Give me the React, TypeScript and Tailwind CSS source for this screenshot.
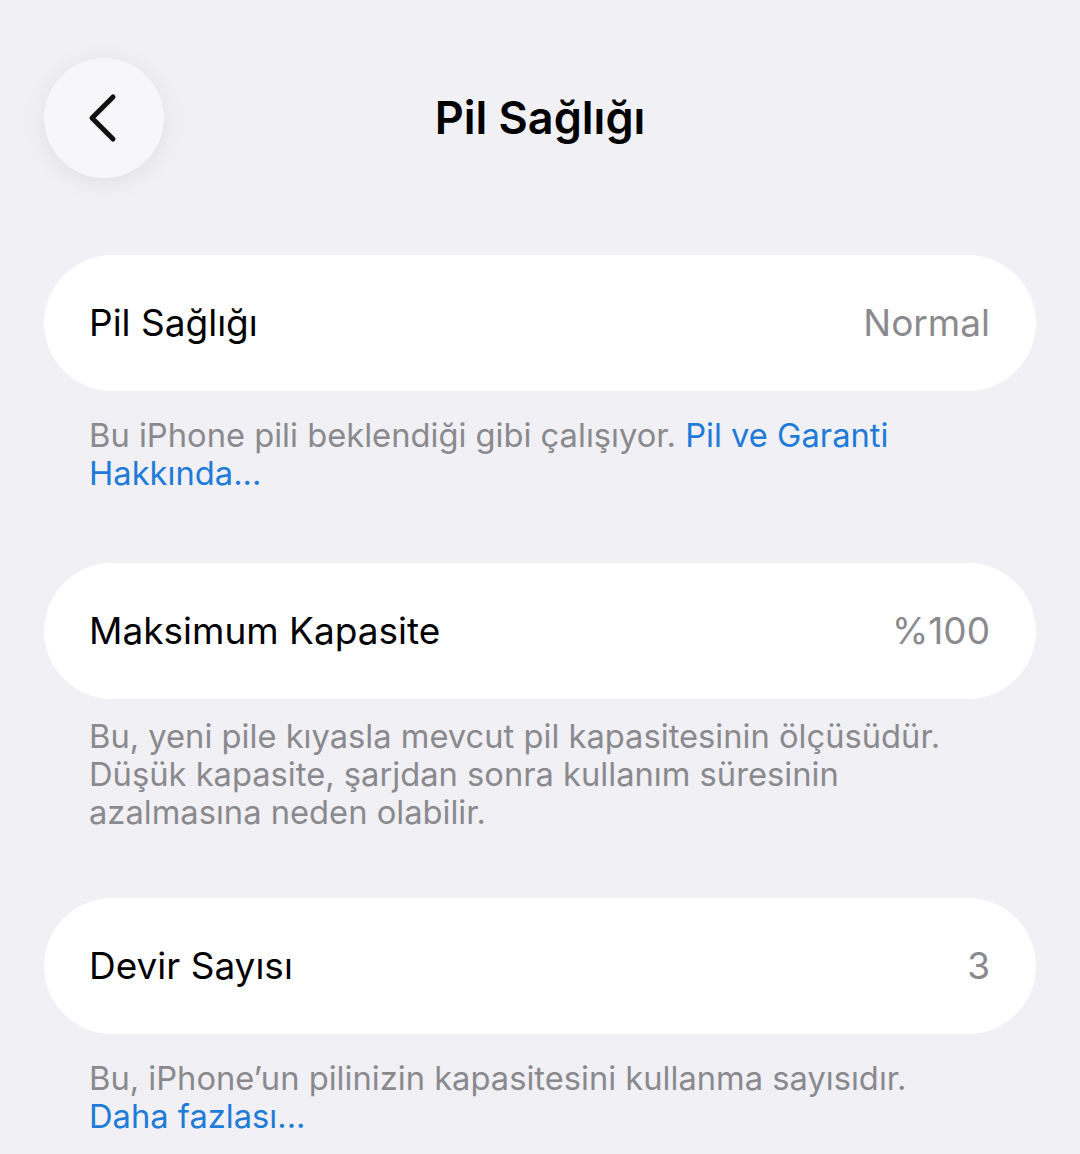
import React from 'react'

// iOS "Pil Sağlığı" (Battery Health) settings screen

type Row = {
  label: string
  value: string
  footer: React.ReactNode
  gap: string // space above the card
  footerGap: string // space between card and footer
}

const rows: Row[] = [
  {
    label: 'Pil Sağlığı',
    value: 'Normal',
    gap: 'mt-0',
    footerGap: 'mt-[25px]',
    footer: (
      <>
        Bu iPhone pili beklendiği gibi çalışıyor.{' '}
        <span className="text-[#1e7bd8]">
          Pil ve Garanti
          <br />
          Hakkında...
        </span>
      </>
    ),
  },
  {
    label: 'Maksimum Kapasite',
    value: '%100',
    gap: 'mt-[71px]',
    footerGap: 'mt-[18px]',
    footer: (
      <>
        Bu, yeni pile kıyasla mevcut pil kapasitesinin ölçüsüdür.
        <br />
        Düşük kapasite, şarjdan sonra kullanım süresinin
        <br />
        azalmasına neden olabilir.
      </>
    ),
  },
  {
    label: 'Devir Sayısı',
    value: '3',
    gap: 'mt-[67px]',
    footerGap: 'mt-[25px]',
    footer: (
      <>
        Bu, iPhone’un pilinizin kapasitesini kullanma sayısıdır.
        <br />
        <span className="text-[#1e7bd8]">Daha fazlası...</span>
      </>
    ),
  },
]

function BackButton() {
  return (
    <button className="flex h-[120px] w-[120px] items-center justify-center rounded-full bg-[#f7f7f9] shadow-[0_4px_24px_rgba(0,0,0,0.07)]">
      <svg width="40" height="56" viewBox="0 0 40 56" fill="none" aria-hidden>
        <path
          d="M29 7 L8 28 L29 49"
          stroke="#111"
          strokeWidth="5"
          strokeLinecap="round"
          strokeLinejoin="round"
        />
      </svg>
    </button>
  )
}

export default function App() {
  return (
    <div
      className="min-h-[1154px] w-[1080px] bg-[#f0f0f5] px-[44px] pt-[58px] text-black"
      style={{ fontFamily: 'Inter, "Noto Sans", sans-serif' }}
    >
      {/* Nav bar */}
      <div className="relative flex h-[120px] items-center">
        <BackButton />
        <h1 className="pointer-events-none absolute left-0 right-0 text-center text-[45px] font-semibold">
          Pil Sağlığı
        </h1>
      </div>

      <div className="mt-[77px] flex flex-col">
        {rows.map((r) => (
          <section key={r.label} className={r.gap}>
            <div className="flex h-[136px] items-center justify-between rounded-full bg-white pl-[45px] pr-[46px]">
              <span className="text-[37px]">{r.label}</span>
              <span className="text-[37px] text-[#8a8a8e]">{r.value}</span>
            </div>
            <p
              className={`${r.footerGap} whitespace-nowrap pl-[45px] text-[32.7px] leading-[38px] text-[#8a8a8e]`}
            >
              {r.footer}
            </p>
          </section>
        ))}
      </div>
    </div>
  )
}
